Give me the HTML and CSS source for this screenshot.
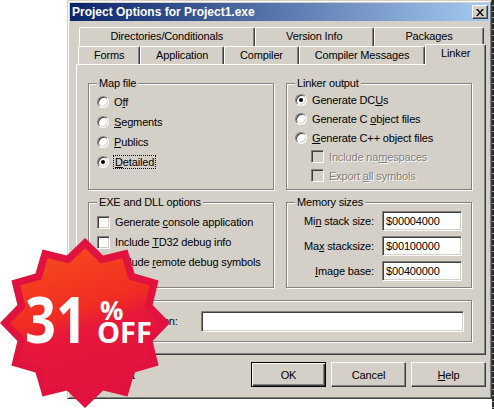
FILE: index.html
```html
<!DOCTYPE html>
<html lang="en">
<head>
    <meta charset="UTF-8">
    <meta name="viewport" content="width=device-width, initial-scale=1.0">
    <title>Project Options</title>
    <link rel="stylesheet" href="styles.css">
</head>
<body>
    <div class="window">
        <div class="titlebar">
            <span class="title">Project Options for Project1.exe</span>
            <div class="close">
                <svg width="8" height="7" viewBox="0 0 8 7"><path d="M0 0h2l2 2.4 2-2.4h2l-3 3.5 3 3.5h-2l-2-2.4-2 2.4h-2l3-3.5z" fill="#000"/></svg>
            </div>
        </div>
        <div class="content">
            <div class="tab-row back">
                <div class="tab">Directories/Conditionals</div>
                <div class="tab">Version Info</div>
                <div class="tab">Packages</div>
            </div>
            <div class="tab-row front">
                <div class="tab">Forms</div>
                <div class="tab">Application</div>
                <div class="tab">Compiler</div>
                <div class="tab">Compiler Messages</div>
                <div class="tab active">Linker</div>
            </div>
            <div class="page">
                <fieldset class="group mapfile">
                    <legend>Map file</legend>
                    <div class="option"><span class="radio"></span><span>O<u>f</u>f</span></div>
                    <div class="option"><span class="radio"></span><span><u>S</u>egments</span></div>
                    <div class="option"><span class="radio"></span><span><u>P</u>ublics</span></div>
                    <div class="option"><span class="radio on"></span><span class="focus"><u>D</u>etailed</span></div>
                </fieldset>
                <fieldset class="group linker">
                    <legend>Linker output</legend>
                    <div class="option"><span class="radio on"></span><span>Generate DC<u>U</u>s</span></div>
                    <div class="option"><span class="radio"></span><span>Generate C <u>o</u>bject files</span></div>
                    <div class="option"><span class="radio"></span><span><u>G</u>enerate C++ object files</span></div>
                    <div class="option sub disabled"><span class="check off"></span><span>Include na<u>m</u>espaces</span></div>
                    <div class="option sub disabled"><span class="check off"></span><span>Export <u>a</u>ll symbols</span></div>
                </fieldset>
                <fieldset class="group exe">
                    <legend>EXE and DLL options</legend>
                    <div class="option"><span class="check"></span><span>Generate <u>c</u>onsole application</span></div>
                    <div class="option"><span class="check"></span><span>Include <u>T</u>D32 debug info</span></div>
                    <div class="option"><span class="check"></span><span>Include <u>r</u>emote debug symbols</span></div>
                </fieldset>
                <fieldset class="group memory">
                    <legend>Memory sizes</legend>
                    <label>Mi<u>n</u> stack size:</label>
                    <div class="edit">$00004000</div>
                    <label>Ma<u>x</u> stacksize:</label>
                    <div class="edit">$00100000</div>
                    <label><u>I</u>mage base:</label>
                    <div class="edit">$00400000</div>
                </fieldset>
                <fieldset class="group description">
                    <label>EXE Description:</label>
                    <div class="edit wide"></div>
                </fieldset>
            </div>
            <div class="footer">
                <div class="option default-opt"><span class="check"></span><span>Default</span></div>
                <div class="btn default">OK</div>
                <div class="btn">Cancel</div>
                <div class="btn"><u>H</u>elp</div>
            </div>
        </div>
    </div>

    <svg class="badge" width="171" height="171" viewBox="0 0 171 171">
        <defs>
            <polygon id="star" points="170,85 152.6,66.9 158.6,42.5 134.5,35.5 127.5,11.4 103.1,17.4 85,0 66.9,17.4 42.5,11.4 35.5,35.5 11.4,42.5 17.4,66.9 0,85 17.4,103.1 11.4,127.5 35.5,134.5 42.5,158.6 66.9,152.6 85,170 103.1,152.6 127.5,158.6 134.5,134.5 158.6,127.5 152.6,103.1"/>
            <linearGradient id="glow" x1="0" y1="0" x2="0.3" y2="1">
                <stop offset="0" stop-color="#f6501c"/>
                <stop offset="0.5" stop-color="#f12c23"/>
                <stop offset="0.64" stop-color="#e7183b"/>
                <stop offset="1" stop-color="#e2133e"/>
            </linearGradient>
        </defs>
        <use href="#star" fill="#e1123d"/>
        <use href="#star" fill="url(#glow)" transform="translate(85 85) scale(0.88) translate(-85 -85)"/>
        <text class="badge-num" x="25" y="105" textLength="62" lengthAdjust="spacingAndGlyphs">31</text>
        <text class="badge-pct" x="100" y="82">%</text>
        <text class="badge-off" x="97" y="105" textLength="55" lengthAdjust="spacingAndGlyphs">OFF</text>
    </svg>
</body>
</html>
```

FILE: styles.css
```css
html, body {
    height: 100%;
}
body {
    margin: 0;
    position: relative;
    overflow: hidden;
    background: repeating-linear-gradient(#2a2a2a 0 5px, #9a9a9a 5px 6px) right top / 2px 100% no-repeat #fff;
    font-family: "Liberation Sans", Arial, sans-serif;
    font-size: 11px;
    letter-spacing: -0.15px;
    color: #000;
}
.window {
    margin-left: 67px;
    width: 425px;
    height: 399px;
    box-sizing: border-box;
    padding: 2px;
    background: #d4d0c8;
    border: 1px solid;
    border-color: #d4d0c8 #404040 #404040 #d4d0c8;
    box-shadow: inset 1px 1px #fff, inset -1px -1px #808080;
    display: flex;
    flex-direction: column;
}
.titlebar {
    height: 18px;
    flex: none;
    display: flex;
    align-items: center;
    justify-content: space-between;
    padding: 0 1px 0 2px;
    background: linear-gradient(to right, #0a246a, #a6caf0);
}
.title {
    color: #fff;
    font-weight: bold;
    font-size: 12px;
    letter-spacing: 0;
}
.close {
    width: 16px;
    height: 14px;
    box-sizing: border-box;
    background: #d4d0c8;
    border: 1px solid;
    border-color: #fff #404040 #404040 #fff;
    box-shadow: inset -1px -1px #808080;
    display: flex;
    align-items: center;
    justify-content: center;
}
.content {
    flex: 1;
    display: flex;
    flex-direction: column;
    padding: 6px 3px 7px 6px;
}

/* tabs */
.tab-row {
    display: flex;
    flex: none;
}
.tab-row.back {
    height: 19px;
    margin: 0 2px 0 3px;
}
.tab-row.front {
    height: 18px;
    margin-left: 2px;
}
.tab {
    flex: 1 1 auto;
    box-sizing: border-box;
    height: 100%;
    padding: 0 4px;
    text-align: center;
    white-space: nowrap;
    line-height: 17px;
    background: #d4d0c8;
    border-top: 1px solid #fff;
    border-left: 1px solid #fff;
    border-right: 1px solid #404040;
    box-shadow: inset -1px 0 #808080;
    border-radius: 2px 2px 0 0;
}
.tab.active {
    position: relative;
    z-index: 1;
    height: calc(100% + 3px);
    margin-top: -2px;
}
.page {
    height: 291px;
    flex: none;
    box-sizing: border-box;
    border: 1px solid;
    border-color: #fff #404040 #404040 #fff;
    box-shadow: inset -1px -1px #808080;
    padding: 12px 0 0 11px;
    display: grid;
    grid-template-columns: 186px 186px;
    grid-template-rows: 113px 92px 48px;
    gap: 6px 12px;
    align-content: start;
}

/* group boxes */
.group {
    margin: 0;
    min-width: 0;
    padding: 0 8px;
    border: 1px solid #808080;
    box-shadow: inset 1px 1px #fff, 1px 1px #fff;
}
.group legend {
    padding: 0 2px;
    line-height: 13px;
    background: #d4d0c8;
}
.mapfile {
    padding-top: 2px;
}
.exe {
    padding-top: 3px;
}
.option {
    display: flex;
    align-items: center;
    gap: 5px;
    height: 20px;
    white-space: nowrap;
}
.linker .option {
    height: 19px;
}
.option.sub {
    padding-left: 16px;
}
.disabled {
    color: #808080;
    text-shadow: 1px 1px #fff;
}
.radio, .check {
    flex: none;
    position: relative;
    box-sizing: border-box;
    background: #fff;
    border: 1px solid;
    border-color: #808080 #fff #fff #808080;
    box-shadow: inset 1px 1px #404040, inset -1px -1px #d4d0c8;
}
.radio {
    width: 12px;
    height: 12px;
    border-radius: 50%;
}
.radio.on::after {
    content: "";
    position: absolute;
    left: 3px;
    top: 3px;
    width: 4px;
    height: 4px;
    border-radius: 50%;
    background: #000;
}
.check {
    width: 13px;
    height: 13px;
}
.check.off {
    background: #d4d0c8;
}
.focus {
    outline: 1px dotted #000;
    padding: 0 1px;
}

/* memory sizes */
.memory {
    display: grid;
    grid-template-columns: 1fr 80px;
    grid-auto-rows: 20px;
    row-gap: 5px;
    column-gap: 8px;
    align-items: center;
    align-content: start;
    padding: 2px 9px 0 8px;
}
.memory label {
    text-align: right;
    white-space: nowrap;
}
.edit {
    box-sizing: border-box;
    height: 20px;
    padding-left: 3px;
    line-height: 18px;
    background: #fff;
    border: 1px solid;
    border-color: #808080 #fff #fff #808080;
    box-shadow: inset 1px 1px #404040, inset -1px -1px #d4d0c8;
}
.description {
    grid-column: 1 / -1;
    margin-top: 6px;
    display: flex;
    align-items: center;
    justify-content: space-between;
    padding: 0 7px 0 8px;
}
.edit.wide {
    width: 263px;
    height: 21px;
}

/* bottom buttons */
.footer {
    display: flex;
    align-items: center;
    gap: 5px;
    height: 25px;
    margin-top: 7px;
}
.default-opt {
    margin-right: auto;
    padding-left: 7px;
}
.btn {
    width: 75px;
    height: 25px;
    box-sizing: border-box;
    display: flex;
    align-items: center;
    justify-content: center;
    background: #d4d0c8;
    border: 1px solid;
    border-color: #fff #404040 #404040 #fff;
    box-shadow: inset -1px -1px #808080;
}
.btn.default {
    border-color: #000;
    box-shadow: inset 1px 1px #fff, inset -1px -1px #404040, inset -2px -2px #808080;
}

/* discount badge */
.badge {
    position: absolute;
    left: 0;
    top: 238px;
}
.badge text {
    font-family: "Open Sans", "Liberation Sans", sans-serif;
    font-weight: bold;
    fill: #fff;
    letter-spacing: 0;
}
.badge-num {
    font-size: 64px;
}
.badge-pct {
    font-size: 26px;
}
.badge-off {
    font-size: 28px;
}
```
